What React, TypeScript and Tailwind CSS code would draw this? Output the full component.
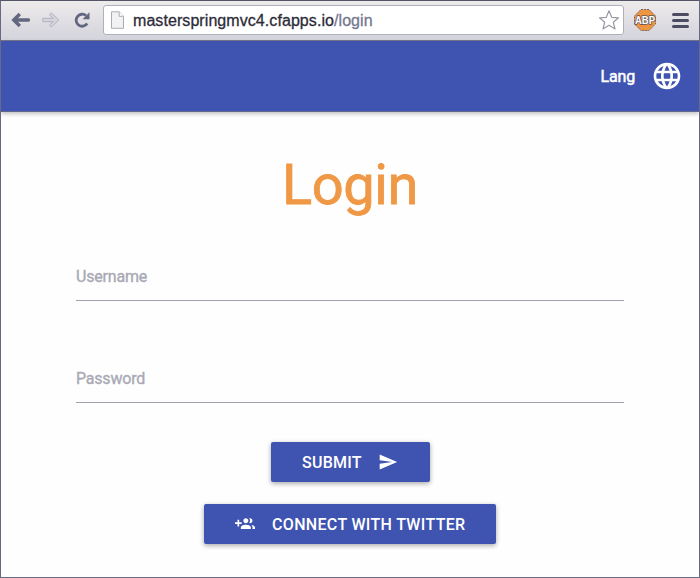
import type { ReactNode } from 'react';
import { MdLanguage, MdSend } from 'react-icons/md';

function GroupAdd() {
  return (
    <svg viewBox="0 0 24 24" className="h-[20px] w-[20px] shrink-0" fill="currentColor">
      <path d="M8 10H5V7H3v3H0v2h3v3h2v-3h3v-2zm10 1c1.66 0 2.99-1.34 2.99-3S19.66 5 18 5c-.32 0-.63.05-.91.14.57.81.9 1.79.9 2.86s-.34 2.04-.9 2.86c.28.09.59.14.91.14zm-5 0c1.66 0 2.99-1.34 2.99-3S14.66 5 13 5c-1.66 0-3 1.34-3 3s1.34 3 3 3zm6.62 2.16c.83.73 1.38 1.66 1.38 2.84v2h3v-2c0-1.54-2.37-2.49-4.38-2.84zM13 13c-2 0-6 1-6 3v2h12v-2c0-2-4-3-6-3z" />
    </svg>
  );
}

function BrowserBar() {
  return (
    <div className="flex h-[40px] shrink-0 items-center border-b border-[#77778c] bg-linear-to-b from-[#eeebeb] to-[#d3d3dc] pb-px">
      <svg width="19" height="16" viewBox="0 0 19 16" className="ml-[10px] shrink-0" fill="none" stroke="#62667f">
        <path d="M17.3 8H4" strokeWidth="3.6" strokeLinecap="round" />
        <path d="M8.8 2L2.8 8l6 6" strokeWidth="3.4" />
      </svg>
      <svg width="18" height="16" viewBox="0 0 18 16" className="ml-[12px] shrink-0" fill="#d5d5de" stroke="#b2b2bf" strokeWidth="1">
        <path d="M.8 6.3h10.4L7.4 2.8l1.8-1.9L16.8 8l-7.6 7.1-1.8-1.9 3.8-3.5H.8z" />
      </svg>
      <svg width="16" height="16" viewBox="0 0 16 16" className="ml-[14px] shrink-0">
        <path d="M13.2 11.5A6 6 0 1 1 12 3.6" fill="none" stroke="#62667f" strokeWidth="2.8" />
        <path d="M15.5 .3v7H8.6z" fill="#62667f" />
      </svg>
      <div className="ml-[13px] flex h-[30px] w-[521px] shrink-0 items-center rounded-[3px] border border-[#b0b0bb] bg-white">
        <svg width="13" height="18" viewBox="0 0 13 18" className="ml-[7px] shrink-0" fill="#f2f2f2" stroke="#aaaab4">
          <path d="M.5.8h7.7l4.3 4.5v12H.5z" />
          <path d="M8.2.8v4.5h4.3" fill="#fff" />
        </svg>
        <div className="ml-[9px] whitespace-nowrap pt-[2px] font-['Liberation_Sans',Arial,sans-serif] text-[16px] leading-5 tracking-[0.07px] text-[#2c2b38] [-webkit-text-stroke:0.3px]">
          masterspringmvc4.cfapps.io<span className="text-[#74778f]">/login</span>
        </div>
        <svg width="20" height="20" viewBox="0 0 20 20" className="mr-[4px] ml-auto shrink-0" fill="#fff" stroke="#9999a6" strokeWidth="1.2" strokeLinejoin="round">
          <path d="M10 .8l2.7 6.5 6.8.5-5.2 4.4 1.7 6.8-6-3.7L4 19l1.7-6.8L.5 7.8l6.8-.5z" />
        </svg>
      </div>
      <svg width="22" height="22" viewBox="0 0 22 22" className="ml-[10px] shrink-0">
        <path d="M7 .5h8L21.5 7v8L15 21.5H7L.5 15V7z" fill="#ef9540" stroke="#7a6157" strokeDasharray="2 1" />
        <text x="11" y="14.9" textAnchor="middle" textLength="20" lengthAdjust="spacingAndGlyphs" fontFamily="Liberation Sans, Arial, sans-serif" fontWeight="700" fontSize="10.5" fill="#fff" stroke="#62545a" strokeWidth="1.6" paintOrder="stroke">
          ABP
        </text>
      </svg>
      <div className="ml-[16px] flex flex-col gap-[3px]">
        <div className="h-[3px] w-[17px] rounded-full bg-[#4b4c62]" />
        <div className="h-[3px] w-[17px] rounded-full bg-[#4b4c62]" />
        <div className="h-[3px] w-[17px] rounded-full bg-[#4b4c62]" />
      </div>
    </div>
  );
}

function Field({ label, className }: { label: string; className: string }) {
  return (
    <label className={`mx-[75px] block h-[36px] border-b border-[#a1a2af] text-[16px] leading-6 tracking-[-0.2px] text-[#a8a9b4] [-webkit-text-stroke:0.35px] ${className}`}>
      {label}
    </label>
  );
}

function Button({ className, children }: { className: string; children: ReactNode }) {
  return (
    <button
      className={`flex h-[40px] shrink-0 items-center self-center whitespace-nowrap rounded-[2px] bg-[#3f54b1] text-[16px] font-medium text-white shadow-[0_2px_5px_rgba(0,0,0,0.22),0_1px_5px_rgba(0,0,0,0.14)] ${className}`}
    >
      {children}
    </button>
  );
}

export default function App() {
  return (
    <div className="flex h-[578px] w-[700px] flex-col overflow-hidden border border-[#686a85] border-t-[#55556a] bg-[#fefefe] font-['Roboto',sans-serif]">
      <BrowserBar />
      <nav className="flex h-[71px] shrink-0 items-center justify-end border-b border-[#61678f] bg-[#3f54b1] pr-[16px] text-white shadow-[0_2px_4px_rgba(0,0,0,0.24)]">
        <span className="pt-[2px] text-[16px] leading-6 tracking-[-0.15px] [-webkit-text-stroke:0.5px]">Lang</span>
        <MdLanguage className="ml-[16px] size-[32px]" />
      </nav>
      <main className="flex flex-col">
        <h1 className="mt-[41px] text-center text-[56px] leading-[64px] tracking-[-0.4px] text-[#ef9845] [-webkit-text-stroke:0.8px]">Login</h1>
        <Field label="Username" className="mt-[48px]" />
        <Field label="Password" className="mt-[66px]" />
        <Button className="mt-[39px] ml-px w-[159px] pl-[31px]">
          <span className="pt-px tracking-[0.25px]">SUBMIT</span>
          <MdSend className="ml-[16px] size-[20px]" />
        </Button>
        <Button className="mt-[22px] w-[292px] pl-[31px]">
          <GroupAdd />
          <span className="ml-[17px] pt-px tracking-[0.33px]">CONNECT WITH TWITTER</span>
        </Button>
      </main>
    </div>
  );
}
